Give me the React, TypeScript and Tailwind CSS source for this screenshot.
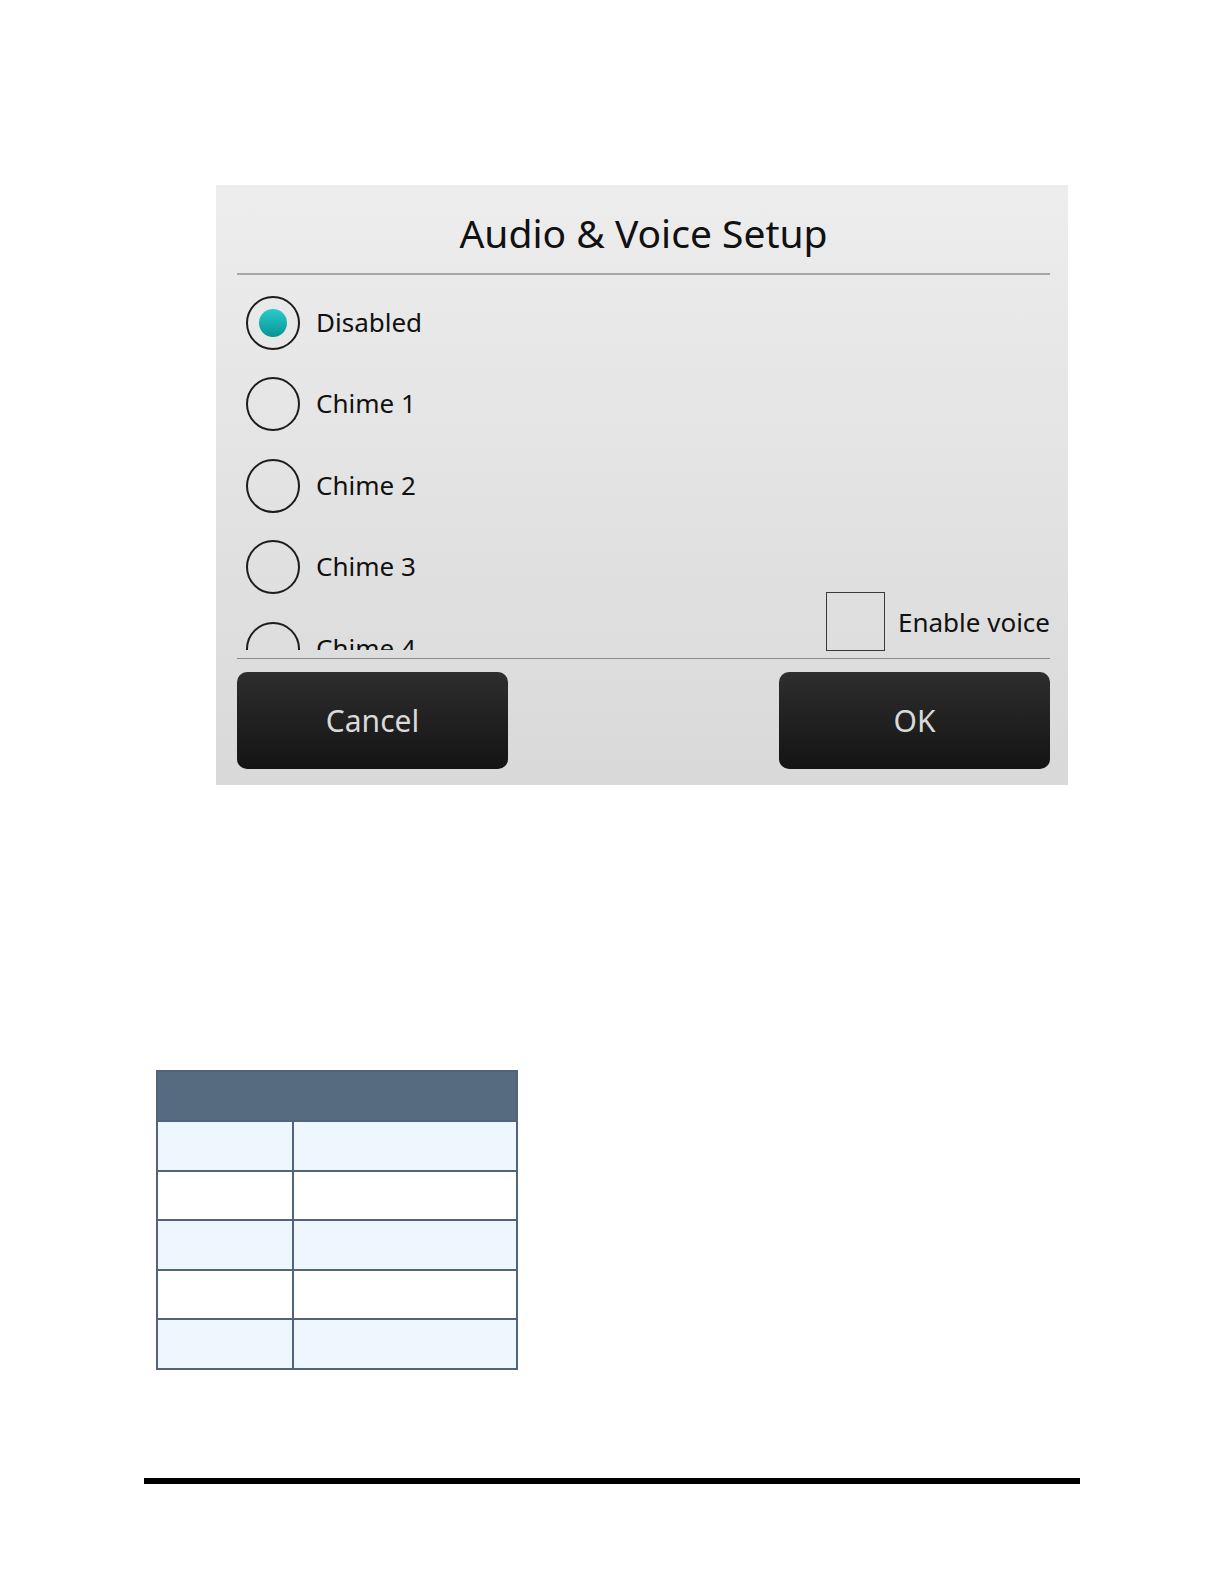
import React from "react";

const font = { fontFamily: '"Noto Sans", "Open Sans", sans-serif' };

const options = ["Disabled", "Chime 1", "Chime 2", "Chime 3", "Chime 4"];

const Radio = ({ label, checked }: { label: string; checked?: boolean }) => (
  <div className="h-[81.5px] flex flex-row items-center shrink-0">
    <div className="ml-[9px] w-[54px] h-[54px] rounded-full border-2 border-[#1c1c1c] flex items-center justify-center">
      {checked && (
        <div className="w-[28px] h-[28px] rounded-full bg-linear-to-b from-[#28cccc] to-[#069494]" />
      )}
    </div>
    <span className="ml-[16px] -mt-[2px] text-[26px] leading-none text-[#111]">{label}</span>
  </div>
);

const DialogButton = ({ label }: { label: string }) => (
  <button className="w-[271px] h-[97px] rounded-[10px] bg-linear-to-b from-[#2e2e2e] to-[#141414] text-[30px] leading-none text-[#d9d9d9]">
    {label}
  </button>
);

export default function App() {
  const rows = [0, 1, 2, 3, 4];

  return (
    <div className="w-[1224px] min-h-[1584px] bg-white flex flex-col" style={font}>
      {/* Audio & Voice dialog */}
      <div className="mt-[185px] ml-[216px] w-[852px] h-[600px] bg-linear-to-b from-[#ededed] to-[#d9d9d9] flex flex-col pl-[21px] pr-[18px]">
        <div className="h-[88px] pt-[28px] flex justify-center">
          <h1 className="text-[39px] leading-none text-[#111]">Audio &amp; Voice Setup</h1>
        </div>
        <div className="h-[2px] bg-[#a6a6a6]" />

        <div className="h-[383px] flex flex-row justify-between">
          <div className="h-[375px] overflow-hidden pt-[7px] flex flex-col">
            {options.map((o, i) => (
              <Radio key={o} label={o} checked={i === 0} />
            ))}
          </div>
          <div className="self-end pb-[7px] flex flex-row items-center">
            <div className="w-[59px] h-[59px] border-[1.5px] border-[#3a3a3a]" />
            <span className="ml-[13px] text-[26px] leading-none text-[#111]">Enable voice</span>
          </div>
        </div>

        <div className="h-[1px] bg-[#8a8a8a]" />
        <div className="mt-[13px] flex flex-row justify-between">
          <DialogButton label="Cancel" />
          <DialogButton label="OK" />
        </div>
      </div>

      {/* empty table */}
      <table className="mt-[285px] ml-[156px] w-[362px] border-collapse border-2 border-[#52647a]">
        <thead>
          <tr className="h-[50px] bg-[#566b7f]">
            <th className="w-[136px]" />
            <th />
          </tr>
        </thead>
        <tbody>
          {rows.map((r) => (
            <tr key={r} className={`h-[49.6px] ${r % 2 === 0 ? "bg-[#eef6fe]" : "bg-white"}`}>
              <td className="border-2 border-[#52647a]" />
              <td className="border-2 border-[#52647a]" />
            </tr>
          ))}
        </tbody>
      </table>

      <div className="mt-[108px] ml-[144px] w-[936px] h-[6px] bg-black" />
    </div>
  );
}
